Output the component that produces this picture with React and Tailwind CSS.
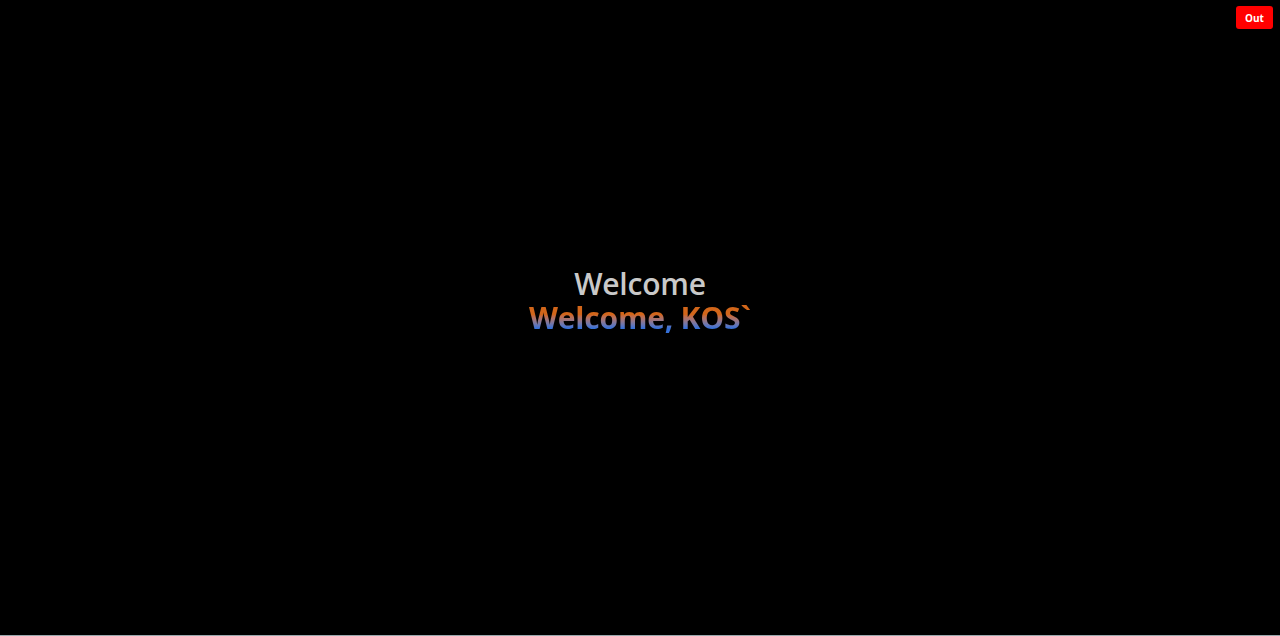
export default function App() {
  return (
    <div className="relative h-[636px] w-full bg-black flex flex-col overflow-hidden" style={{ fontFamily: '"Open Sans", "Noto Sans", sans-serif' }}>
      {/* logout button */}
      <button className="absolute right-[7px] top-[6px] h-[23px] w-[37px] rounded-[3px] bg-[#ff0000] text-white text-[10px] font-bold leading-none">
        Out
      </button>

      <div className="flex-1 flex flex-col items-center justify-center pb-[34px]">
        <h1 className="text-[30px] font-semibold leading-[34px] text-[#c9c9c9] tracking-[-0.2px]">Welcome</h1>
        <h2 className="text-[30px] font-bold leading-[34px] tracking-[-0.2px] bg-gradient-to-b from-[#d2661a] from-[40%] to-[#3570d8] to-[80%] bg-clip-text text-transparent">
          Welcome, KOS`
        </h2>
      </div>
      <div className="h-px w-full bg-[#9aa7ad]" />
    </div>
  );
}
